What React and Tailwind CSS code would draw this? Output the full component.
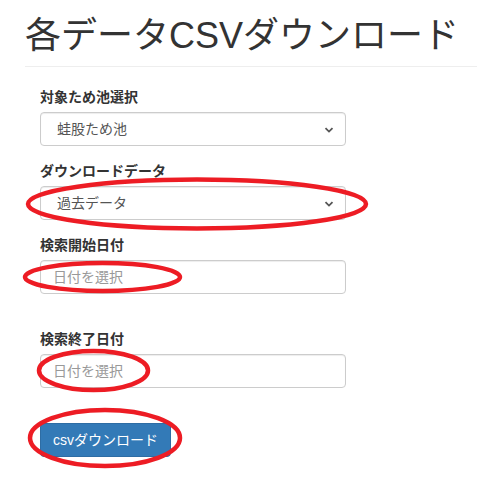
import React from "react";

const font = { fontFamily: '"Liberation Sans", "Noto Sans CJK JP", sans-serif' };

function Chevron() {
  return (
    <svg width="10" height="6" viewBox="0 0 10 6" className="absolute right-[11px] top-[14px]">
      <path d="M1.5 1.2 L5 4.6 L8.5 1.2" fill="none" stroke="#555" strokeWidth="1.8" />
    </svg>
  );
}

function SelectBox({ value }) {
  return (
    <div className="relative h-[34px] w-[306px] rounded-[4px] border border-[#ccc] bg-white pl-[16px] text-[14px] leading-[32px] text-[#555] shadow-[inset_0_1px_1px_rgba(0,0,0,0.075)]">
      {value}
      <Chevron />
    </div>
  );
}

function DateInput() {
  return (
    <div className="h-[34px] w-[306px] rounded-[4px] border border-[#ccc] bg-white pl-[12px] text-[14px] leading-[32px] text-[#999] shadow-[inset_0_1px_1px_rgba(0,0,0,0.075)]">
      日付を選択
    </div>
  );
}

function Label({ children }) {
  return <div className="mb-[5px] h-[20px] text-[14px] font-bold leading-[20px] text-[#333]">{children}</div>;
}

export default function App() {
  return (
    <div className="relative h-[490px] w-[477px] overflow-hidden bg-white" style={font}>
      <div className="pl-[25px]">
        <div className="border-b border-[#eee] pb-[10px] pt-[16px]">
          <h1 className="text-[36px] font-normal leading-[40px] text-[#333]">各データCSVダウンロード</h1>
        </div>
      </div>
      <div className="flex flex-col pl-[40px] pt-[20px]">
        <Label>対象ため池選択</Label>
        <SelectBox value="蛙股ため池" />
        <div className="h-[15px]" />
        <Label>ダウンロードデータ</Label>
        <SelectBox value="過去データ" />
        <div className="h-[15px]" />
        <Label>検索開始日付</Label>
        <DateInput />
        <div className="h-[35px]" />
        <Label>検索終了日付</Label>
        <DateInput />
        <div className="h-[35px]" />
        <div className="h-[34px] w-[131px] rounded-[4px] border border-[#2e6da4] bg-[#337ab7] px-[12px] text-[14px] leading-[32px] text-white">
          csvダウンロード
        </div>
      </div>
      <svg className="pointer-events-none absolute left-0 top-0" width="477" height="490">
        <g fill="none" stroke="#ed1c24" strokeWidth="4.5">
          <ellipse cx="197" cy="204" rx="169" ry="24.5" />
          <ellipse cx="102.5" cy="277" rx="77.5" ry="14" />
          <ellipse cx="93.5" cy="370.5" rx="54.5" ry="19.5" />
          <ellipse cx="105" cy="438" rx="75" ry="28" />
        </g>
      </svg>
    </div>
  );
}
